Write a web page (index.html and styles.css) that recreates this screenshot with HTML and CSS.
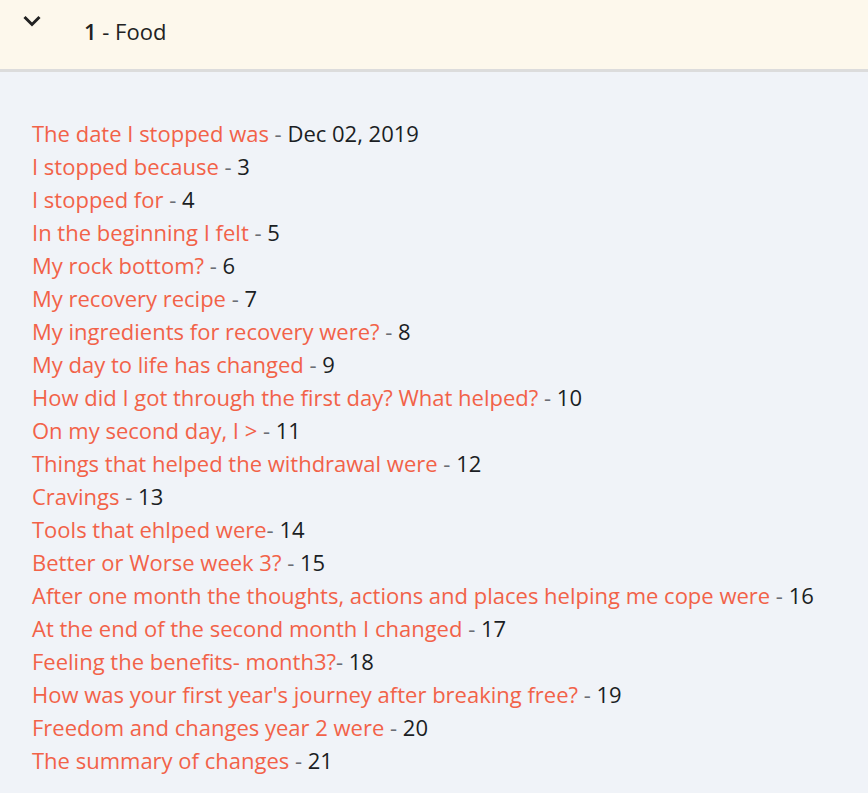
FILE: index.html
```html
<!DOCTYPE html>
<html>
<head>
<meta charset="utf-8">
<link rel="stylesheet" href="styles.css">
</head>
<body>
<div class="panel">
  <div class="panel-header">
    <svg class="chevron" width="20" height="14" viewBox="0 0 20 14"><path d="M2.5 3 L10 10.5 L17.5 3" fill="none" stroke="#222" stroke-width="3"/></svg>
    <div class="title"><span class="num">1</span> - Food</div>
  </div>
  <div class="panel-body">
    <ul class="list">
      <li><a class="q">The date I stopped was</a> - <span class="v">Dec 02, 2019</span></li>
      <li><a class="q">I stopped because</a> - <span class="v">3</span></li>
      <li><a class="q">I stopped for</a> - <span class="v">4</span></li>
      <li><a class="q">In the beginning I felt</a> - <span class="v">5</span></li>
      <li><a class="q">My rock bottom?</a> - <span class="v">6</span></li>
      <li><a class="q">My recovery recipe</a> - <span class="v">7</span></li>
      <li><a class="q">My ingredients for recovery were?</a> - <span class="v">8</span></li>
      <li><a class="q">My day to life has changed</a> - <span class="v">9</span></li>
      <li><a class="q">How did I got through the first day? What helped?</a> - <span class="v">10</span></li>
      <li><a class="q">On my second day, I &gt;</a> - <span class="v">11</span></li>
      <li><a class="q">Things that helped the withdrawal were</a> - <span class="v">12</span></li>
      <li><a class="q">Cravings</a> - <span class="v">13</span></li>
      <li><a class="q">Tools that ehlped were</a>- <span class="v">14</span></li>
      <li><a class="q">Better or Worse week 3?</a> - <span class="v">15</span></li>
      <li><a class="q">After one month the thoughts, actions and places helping me cope were</a> - <span class="v">16</span></li>
      <li><a class="q">At the end of the second month I changed</a> - <span class="v">17</span></li>
      <li><a class="q">Feeling the benefits- month3?</a>- <span class="v">18</span></li>
      <li><a class="q">How was your first year's journey after breaking free?</a> - <span class="v">19</span></li>
      <li><a class="q">Freedom and changes year 2 were</a> - <span class="v">20</span></li>
      <li><a class="q">The summary of changes</a> - <span class="v">21</span></li>
    </ul>
  </div>
</div>
</body>
</html>
```
FILE: styles.css
```css
html, body {
  margin: 0;
  padding: 0;
  height: 100%;
}
body {
  font-family: "Open Sans", "Noto Sans", sans-serif;
  background: #f0f3f8;
  color: #1b1e24;
}
.panel {
  min-height: 100%;
}
.panel-header {
  height: 72px;
  box-sizing: border-box;
  background: #fdf8ec;
  border-bottom: 3px solid #dcdcdc;
  display: flex;
  align-items: flex-start;
  padding-left: 22px;
}
.chevron {
  margin-top: 14px;
  flex: none;
}
.title {
  margin-left: 42px;
  margin-top: 15px;
  font-size: 22px;
  line-height: 32px;
  color: #222;
}
.num {
  font-weight: 600;
}
.panel-body {
  padding: 45px 32px 20px;
}
.list {
  list-style: none;
  margin: 0;
  padding: 0;
  font-size: 22px;
  line-height: 33px;
}
.list li {
  white-space: nowrap;
  color: #6b6e75;
}
.q {
  color: #f26248;
}
.v {
  color: #1b1e24;
}
```
